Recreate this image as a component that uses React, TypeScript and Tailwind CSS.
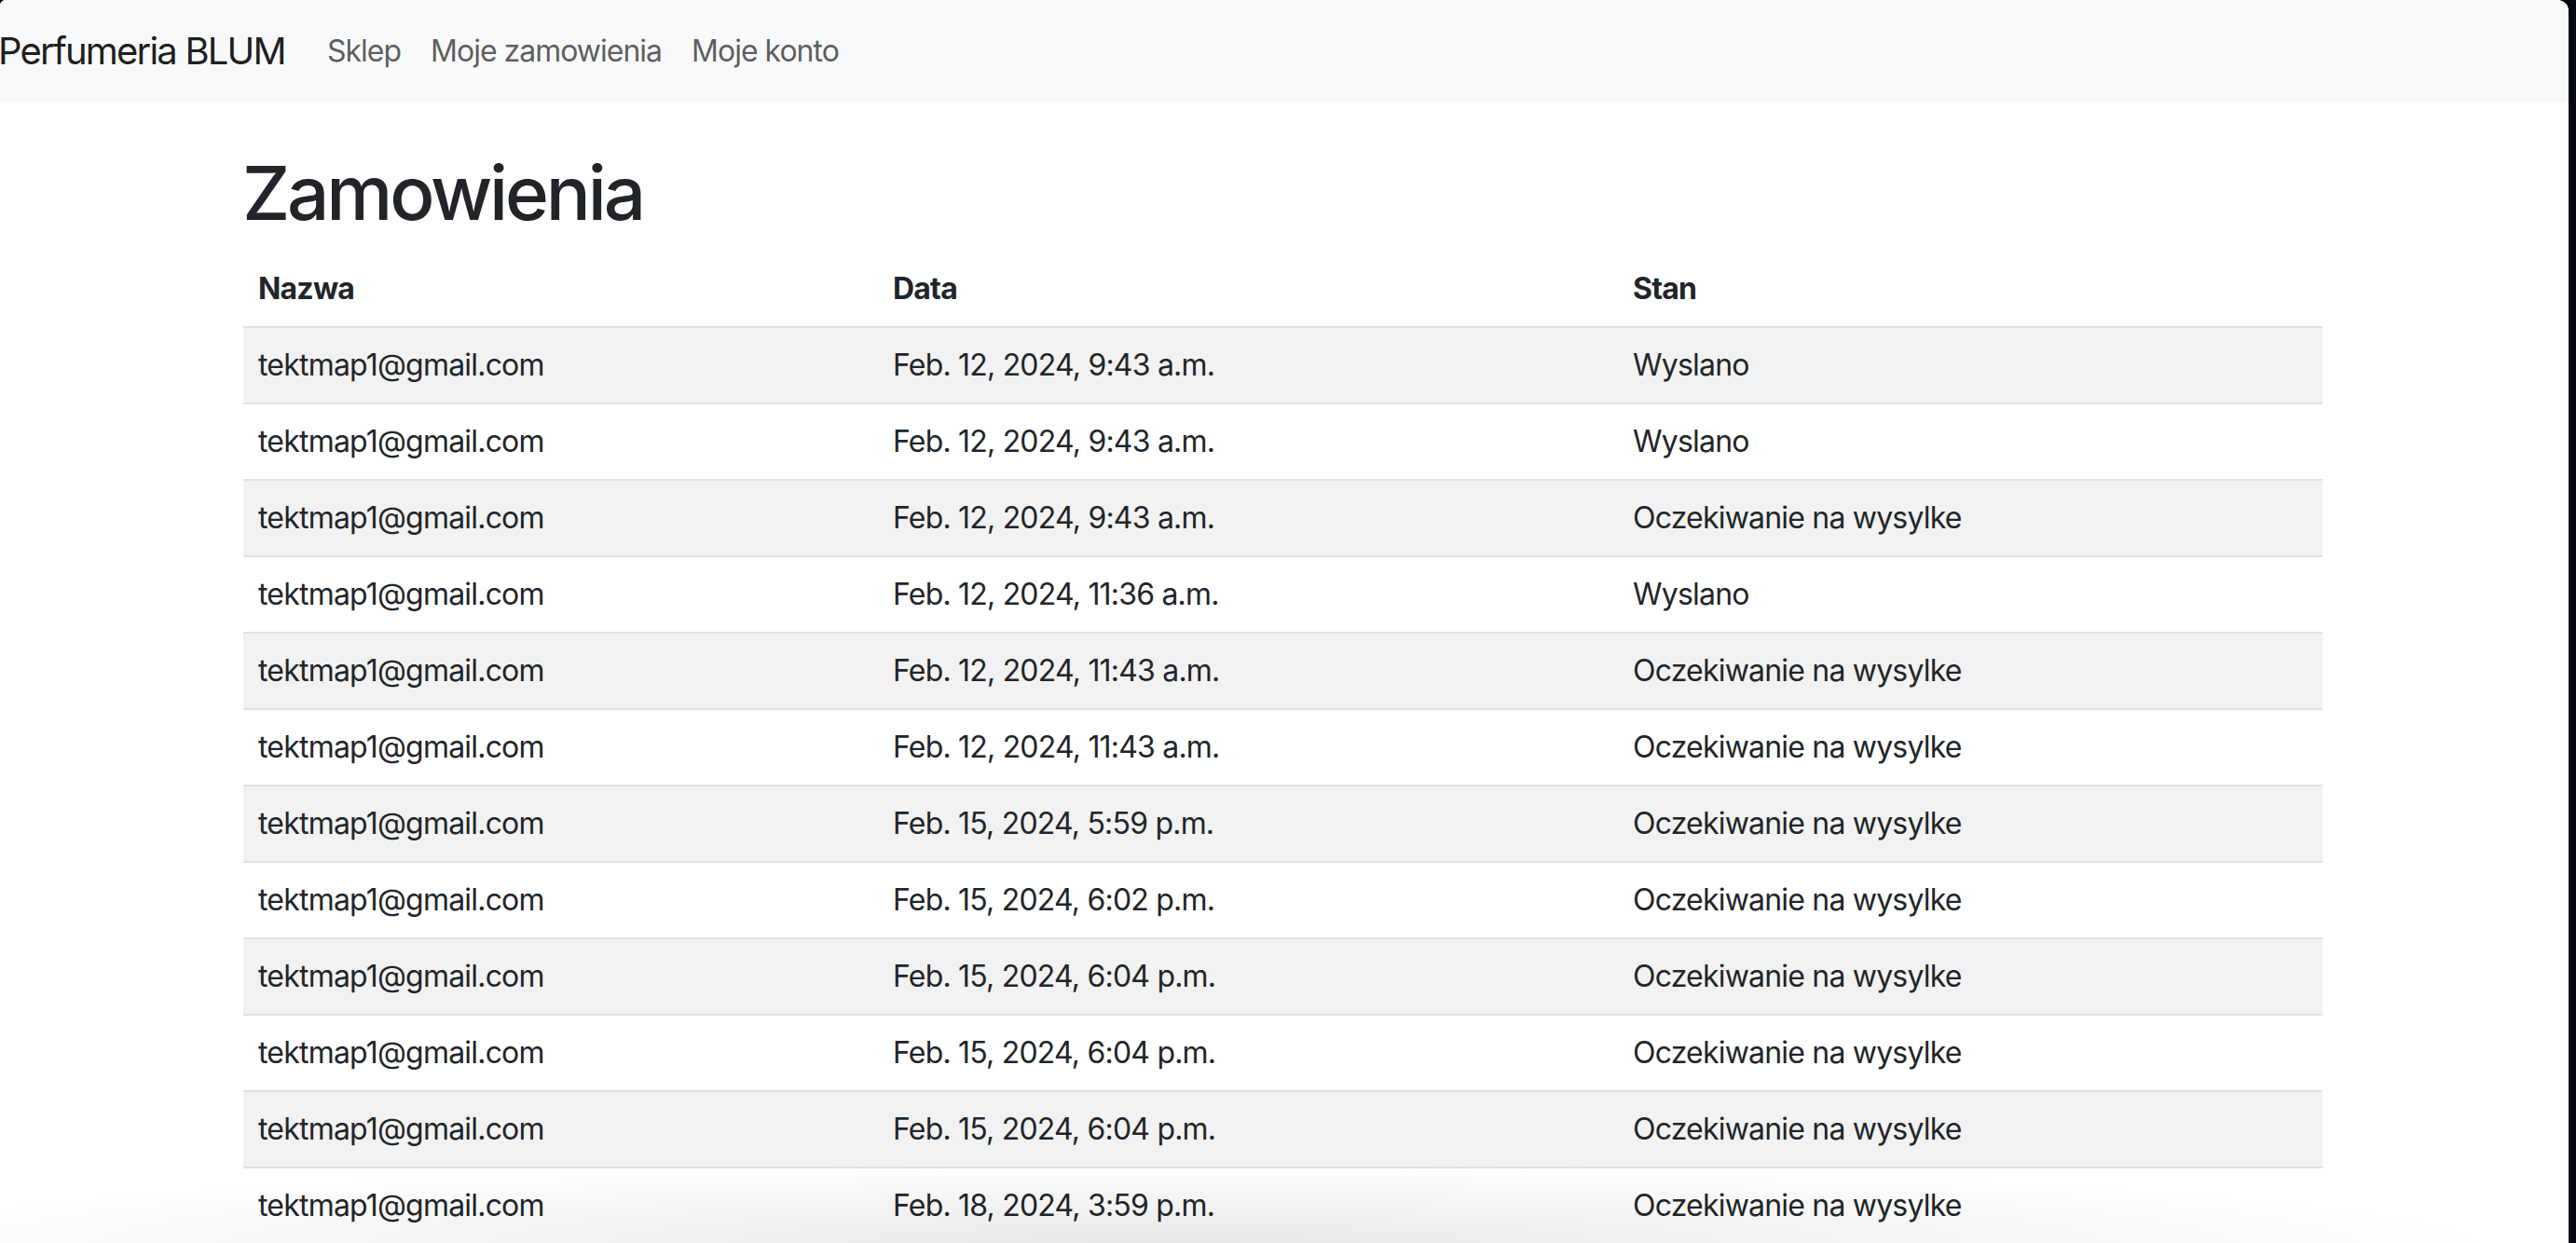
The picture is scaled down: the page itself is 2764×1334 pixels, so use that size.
import React from 'react';

type Order = { name: string; date: string; status: string };

const orders: Order[] = [
  { name: 'tektmap1@gmail.com', date: 'Feb. 12, 2024, 9:43 a.m.', status: 'Wyslano' },
  { name: 'tektmap1@gmail.com', date: 'Feb. 12, 2024, 9:43 a.m.', status: 'Wyslano' },
  { name: 'tektmap1@gmail.com', date: 'Feb. 12, 2024, 9:43 a.m.', status: 'Oczekiwanie na wysylke' },
  { name: 'tektmap1@gmail.com', date: 'Feb. 12, 2024, 11:36 a.m.', status: 'Wyslano' },
  { name: 'tektmap1@gmail.com', date: 'Feb. 12, 2024, 11:43 a.m.', status: 'Oczekiwanie na wysylke' },
  { name: 'tektmap1@gmail.com', date: 'Feb. 12, 2024, 11:43 a.m.', status: 'Oczekiwanie na wysylke' },
  { name: 'tektmap1@gmail.com', date: 'Feb. 15, 2024, 5:59 p.m.', status: 'Oczekiwanie na wysylke' },
  { name: 'tektmap1@gmail.com', date: 'Feb. 15, 2024, 6:02 p.m.', status: 'Oczekiwanie na wysylke' },
  { name: 'tektmap1@gmail.com', date: 'Feb. 15, 2024, 6:04 p.m.', status: 'Oczekiwanie na wysylke' },
  { name: 'tektmap1@gmail.com', date: 'Feb. 15, 2024, 6:04 p.m.', status: 'Oczekiwanie na wysylke' },
  { name: 'tektmap1@gmail.com', date: 'Feb. 15, 2024, 6:04 p.m.', status: 'Oczekiwanie na wysylke' },
  { name: 'tektmap1@gmail.com', date: 'Feb. 18, 2024, 3:59 p.m.', status: 'Oczekiwanie na wysylke' },
];

const Navbar: React.FC = () => {
  return (
    <nav className="h-[110px] bg-[#f8f9fa] flex items-center">
      <a className="text-[40px] leading-[60px] tracking-[-1.8px] text-black/90 -ml-[2px] mr-[29px] whitespace-nowrap">
        Perfumeria BLUM
      </a>
      <ul className="flex items-center text-[32px] leading-[48px] tracking-[-1px] text-black/65">
        <li className="px-4">Sklep</li>
        <li className="px-4">Moje zamowienia</li>
        <li className="px-4">Moje konto</li>
      </ul>
    </nav>
  );
};

const OrdersTable: React.FC = () => {
  return (
    <table className="w-[2231px] border-collapse text-[32px] leading-[48px] tracking-[-0.8px] text-[#212529] table-fixed">
      <colgroup>
        <col className="w-[681px]" />
        <col className="w-[794px]" />
        <col className="w-[756px]" />
      </colgroup>
      <thead>
        <tr className="border-b-2 border-[#dee2e6]">
          <th className="px-4 py-4 text-left font-bold">Nazwa</th>
          <th className="px-4 py-4 text-left font-bold">Data</th>
          <th className="px-4 py-4 text-left font-bold">Stan</th>
        </tr>
      </thead>
      <tbody>
        {orders.map((o, i) => (
          <tr key={i} className={`border-b-2 border-[#dee2e6] ${i % 2 === 0 ? 'bg-[#f2f2f2]' : 'bg-white'}`}>
            <td className="px-4 py-4 whitespace-nowrap">{o.name}</td>
            <td className="px-4 py-4 whitespace-nowrap">{o.date}</td>
            <td className="px-4 py-4 whitespace-nowrap">{o.status}</td>
          </tr>
        ))}
      </tbody>
    </table>
  );
};

export default function App() {
  return (
    <div className="w-full h-[1334px] bg-[#05070f] overflow-hidden flex font-['Inter',sans-serif]">
      <div className="relative w-[2756px] h-full bg-white rounded-tr-[12px] rounded-tl-[6px] overflow-hidden">
        <Navbar />
        <main className="pl-[261px]">
          <h1 className="text-[80px] leading-[96px] font-medium tracking-[-3.2px] text-[#212529] mt-[49px] mb-[15px] -ml-[1px]">
            Zamowienia
          </h1>
          <OrdersTable />
        </main>
        <div className="pointer-events-none absolute bottom-0 -left-[200px] w-[2900px] h-[90px] bg-[radial-gradient(ellipse_50%_100%_at_50%_100%,rgba(0,0,0,0.09),transparent)]" />
      </div>
    </div>
  );
}
